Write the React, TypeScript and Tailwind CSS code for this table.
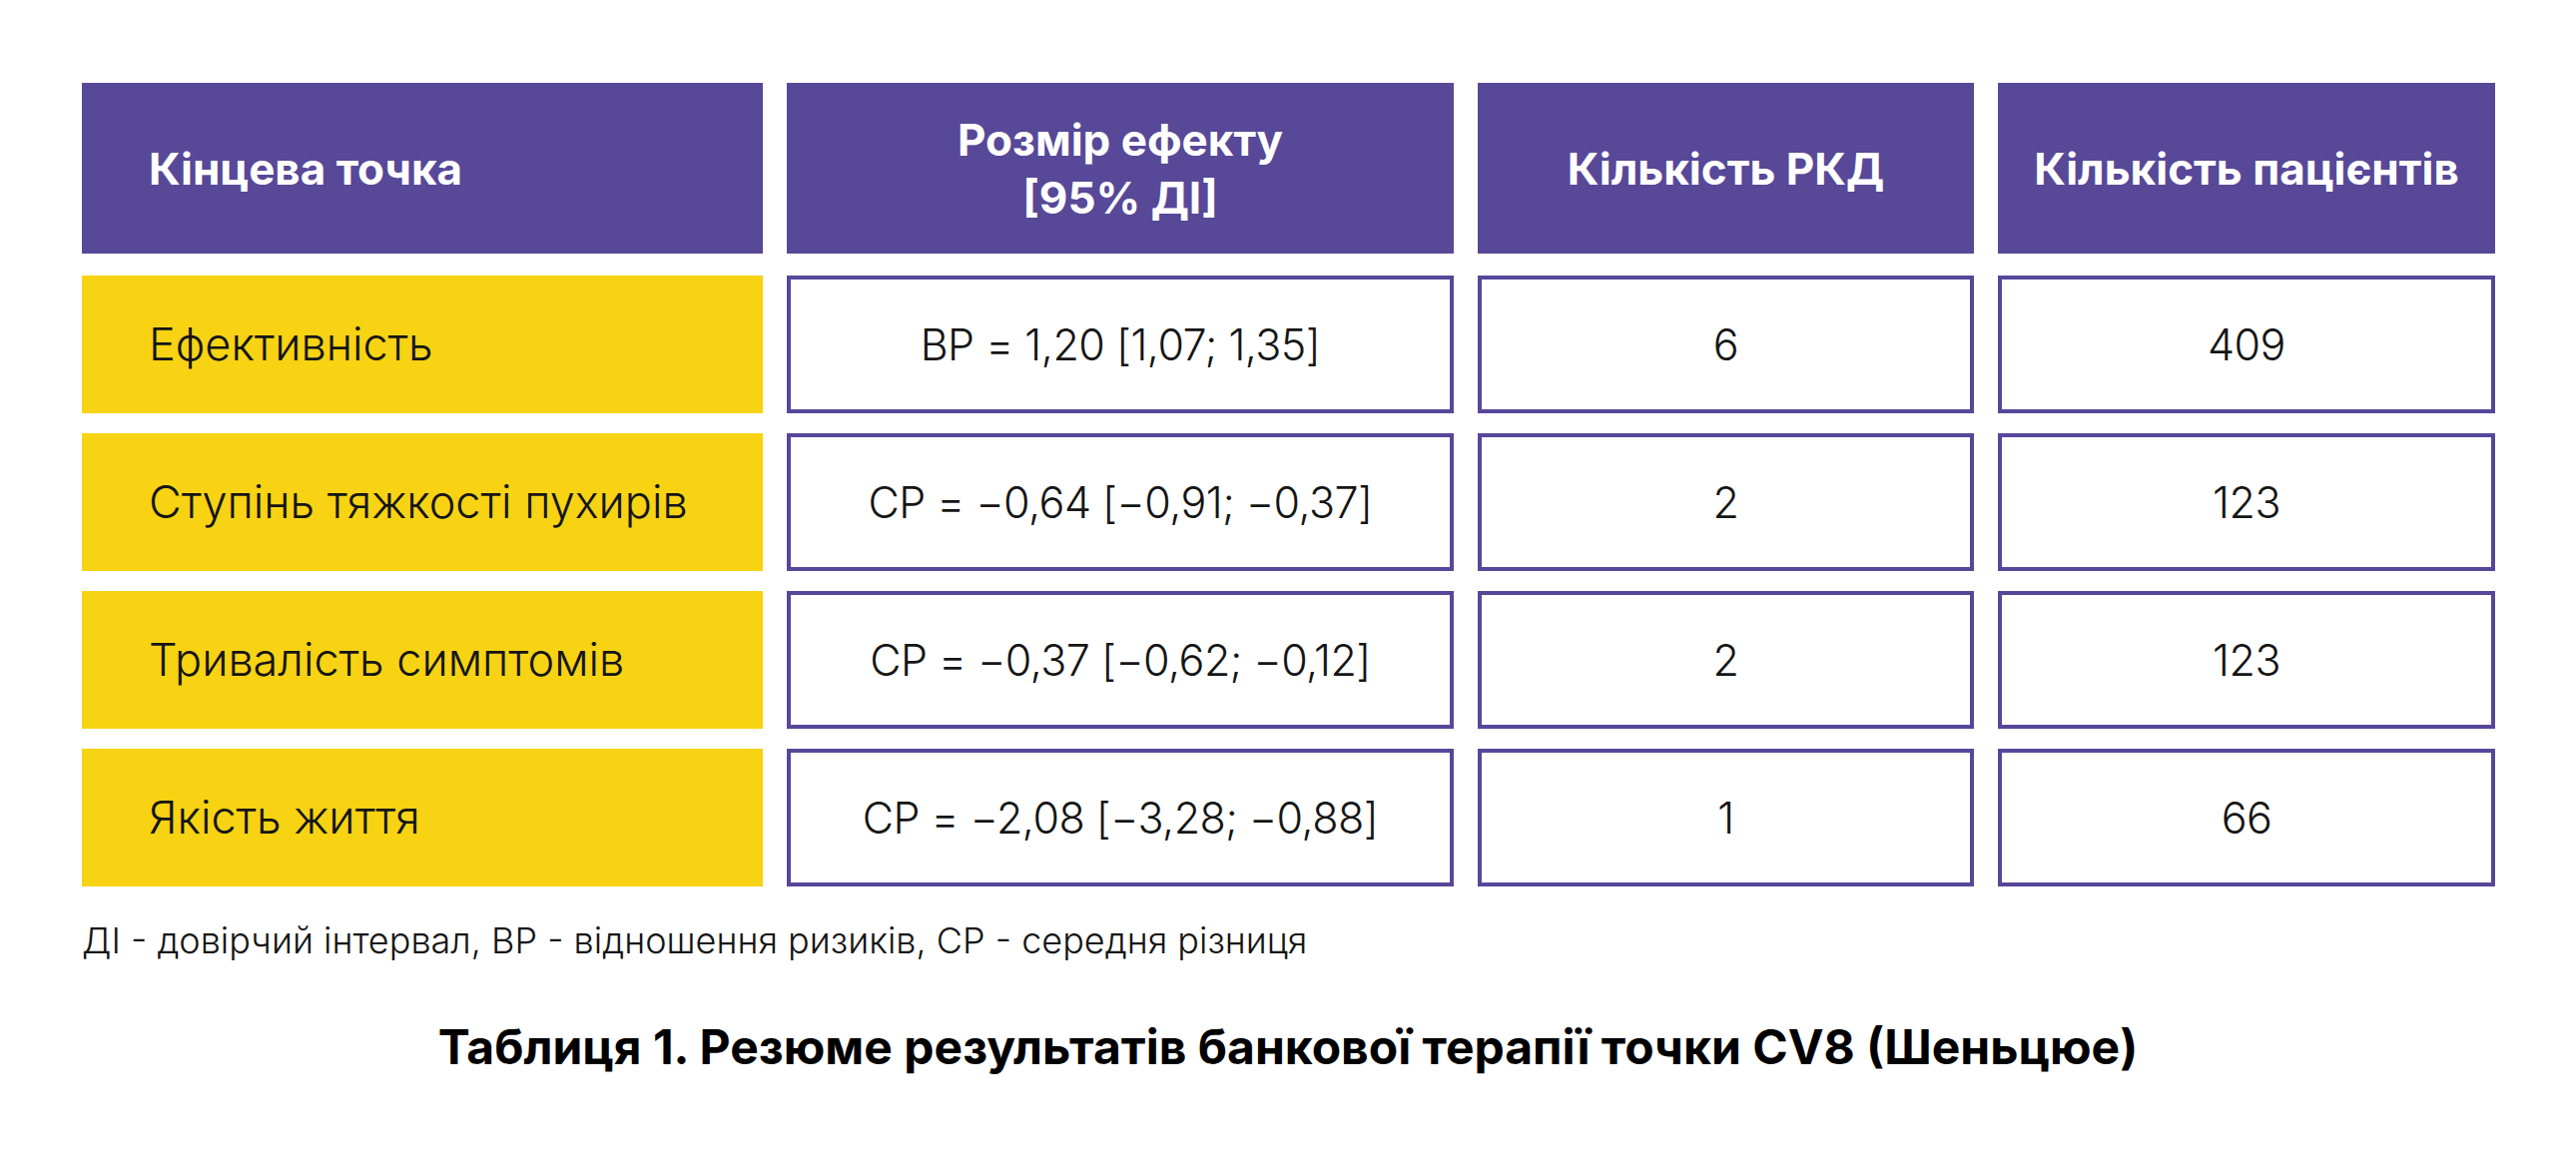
const headers = [
  { label: 'Кінцева точка', align: 'left' },
  { label: 'Розмір ефекту\n[95% ДІ]', align: 'center' },
  { label: 'Кількість РКД', align: 'center' },
  { label: 'Кількість пацієнтів', align: 'center' },
]

const rows = [
  { endpoint: 'Ефективність', effect: 'ВР = 1,20 [1,07; 1,35]', rct: '6', patients: '409' },
  { endpoint: 'Ступінь тяжкості пухирів', effect: 'СР = −0,64 [−0,91; −0,37]', rct: '2', patients: '123' },
  { endpoint: 'Тривалість симптомів', effect: 'СР = −0,37 [−0,62; −0,12]', rct: '2', patients: '123' },
  { endpoint: 'Якість життя', effect: 'СР = −2,08 [−3,28; −0,88]', rct: '1', patients: '66' },
]

const font = { fontFamily: 'Inter, "Noto Sans", sans-serif' }

function ValueCell({ children }: { children: React.ReactNode }) {
  return (
    <div className="flex h-[138px] items-center justify-center border-[4px] border-[#56479a] bg-white text-[43px] font-light tracking-[-0.5px] text-[#151515]">
      {children}
    </div>
  )
}

export default function App() {
  return (
    <div className="min-h-[1163px] w-full bg-white pl-[82px] pt-[83px]" style={font}>
      <div className="grid w-fit grid-cols-[682px_668px_497px_498px] gap-x-[24px] gap-y-[20px]">
        {headers.map((h) => (
          <div
            key={h.label}
            className={`mb-[2px] flex h-[171px] items-center bg-[#574898] text-[44px] font-bold leading-[58px] text-white ${
              h.align === 'left' ? 'justify-start pl-[67px]' : 'justify-center text-center'
            }`}
          >
            <span className="whitespace-pre-line">{h.label}</span>
          </div>
        ))}
        {rows.map((r) => (
          <div key={r.endpoint} className="contents">
            <div className="flex h-[138px] items-center bg-[#f7d313] pl-[67px] text-[45px] font-light text-[#151515]">
              {r.endpoint}
            </div>
            <ValueCell>{r.effect}</ValueCell>
            <ValueCell>{r.rct}</ValueCell>
            <ValueCell>{r.patients}</ValueCell>
          </div>
        ))}
      </div>
      <p className="mt-[32px] text-[36px] font-light leading-[44px] text-[#151515]">
        ДІ - довірчий інтервал, ВР - відношення ризиків, СР - середня різниця
      </p>
      <p className="-ml-[82px] mt-[55px] text-center text-[48px] font-bold leading-[60px] text-black">
        Таблиця 1. Резюме результатів банкової терапії точки CV8 (Шеньцюе)
      </p>
    </div>
  )
}
